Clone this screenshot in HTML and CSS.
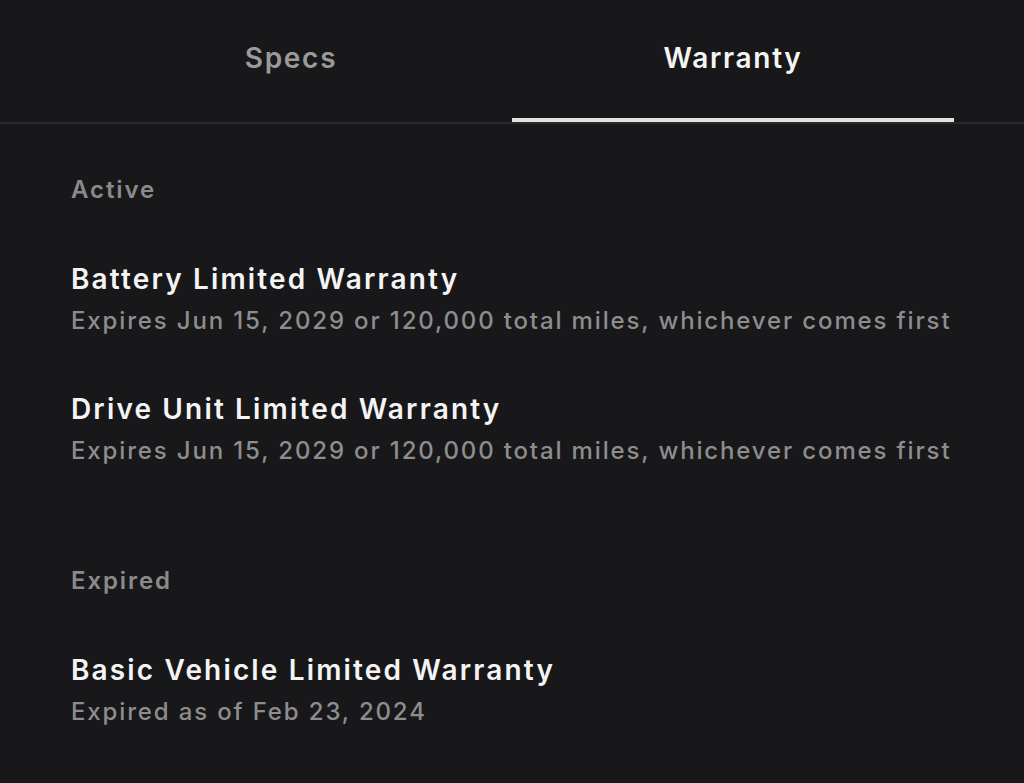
FILE: index.html
```html
<!DOCTYPE html>
<html lang="en">
<head>
    <meta charset="UTF-8">
    <meta name="viewport" content="width=device-width, initial-scale=1.0">
    <title>Warranty</title>
    <link rel="stylesheet" href="styles.css">
</head>
<body>
    <div class="tabs">
        <div class="tab-row">
            <div class="tab">Specs</div>
            <div class="tab active">Warranty</div>
        </div>
    </div>

    <div class="content">
        <div class="section">
            <div class="section-label">Active</div>
            <div class="item">
                <div class="item-title">Battery Limited Warranty</div>
                <div class="item-sub">Expires Jun 15, 2029 or 120,000 total miles, whichever comes first</div>
            </div>
            <div class="item">
                <div class="item-title">Drive Unit Limited Warranty</div>
                <div class="item-sub">Expires Jun 15, 2029 or 120,000 total miles, whichever comes first</div>
            </div>
        </div>

        <div class="section">
            <div class="section-label">Expired</div>
            <div class="item">
                <div class="item-title">Basic Vehicle Limited Warranty</div>
                <div class="item-sub">Expired as of Feb 23, 2024</div>
            </div>
        </div>
    </div>
</body>
</html>
```

FILE: styles.css
```css
* {
    margin: 0;
    padding: 0;
    box-sizing: border-box;
}

body {
    font-family: 'Inter', 'Liberation Sans', sans-serif;
    background-color: #18181a;
    height: 100vh;
    overflow: hidden;
    -webkit-font-smoothing: antialiased;
}

.tabs {
    border-bottom: 2px solid #2a2a2c;
}

.tab-row {
    display: flex;
    padding: 0 70px;
}

.tab {
    flex: 1;
    height: 122px;
    padding-top: 38px;
    text-align: center;
    font-size: 28px;
    line-height: 40px;
    font-weight: 600;
    letter-spacing: 1.7px;
    color: #9a9a9b;
    border-bottom: 4px solid transparent;
}

.tab.active {
    color: #f4f4f4;
    border-bottom-color: #e2e2e2;
}

.content {
    display: flex;
    flex-direction: column;
    gap: 88px;
    padding: 46px 71px 0;
}

.section {
    display: flex;
    flex-direction: column;
    gap: 46px;
}

.section-label {
    font-size: 24px;
    line-height: 40px;
    font-weight: 600;
    letter-spacing: 1.9px;
    color: #8a8a8b;
    margin-bottom: 3px;
}

.item-title {
    font-size: 28px;
    line-height: 40px;
    font-weight: 600;
    letter-spacing: 2.15px;
    color: #f4f4f4;
}

.item-sub {
    font-size: 24px;
    line-height: 44px;
    font-weight: 500;
    letter-spacing: 1.85px;
    color: #8d8d8e;
}
```
